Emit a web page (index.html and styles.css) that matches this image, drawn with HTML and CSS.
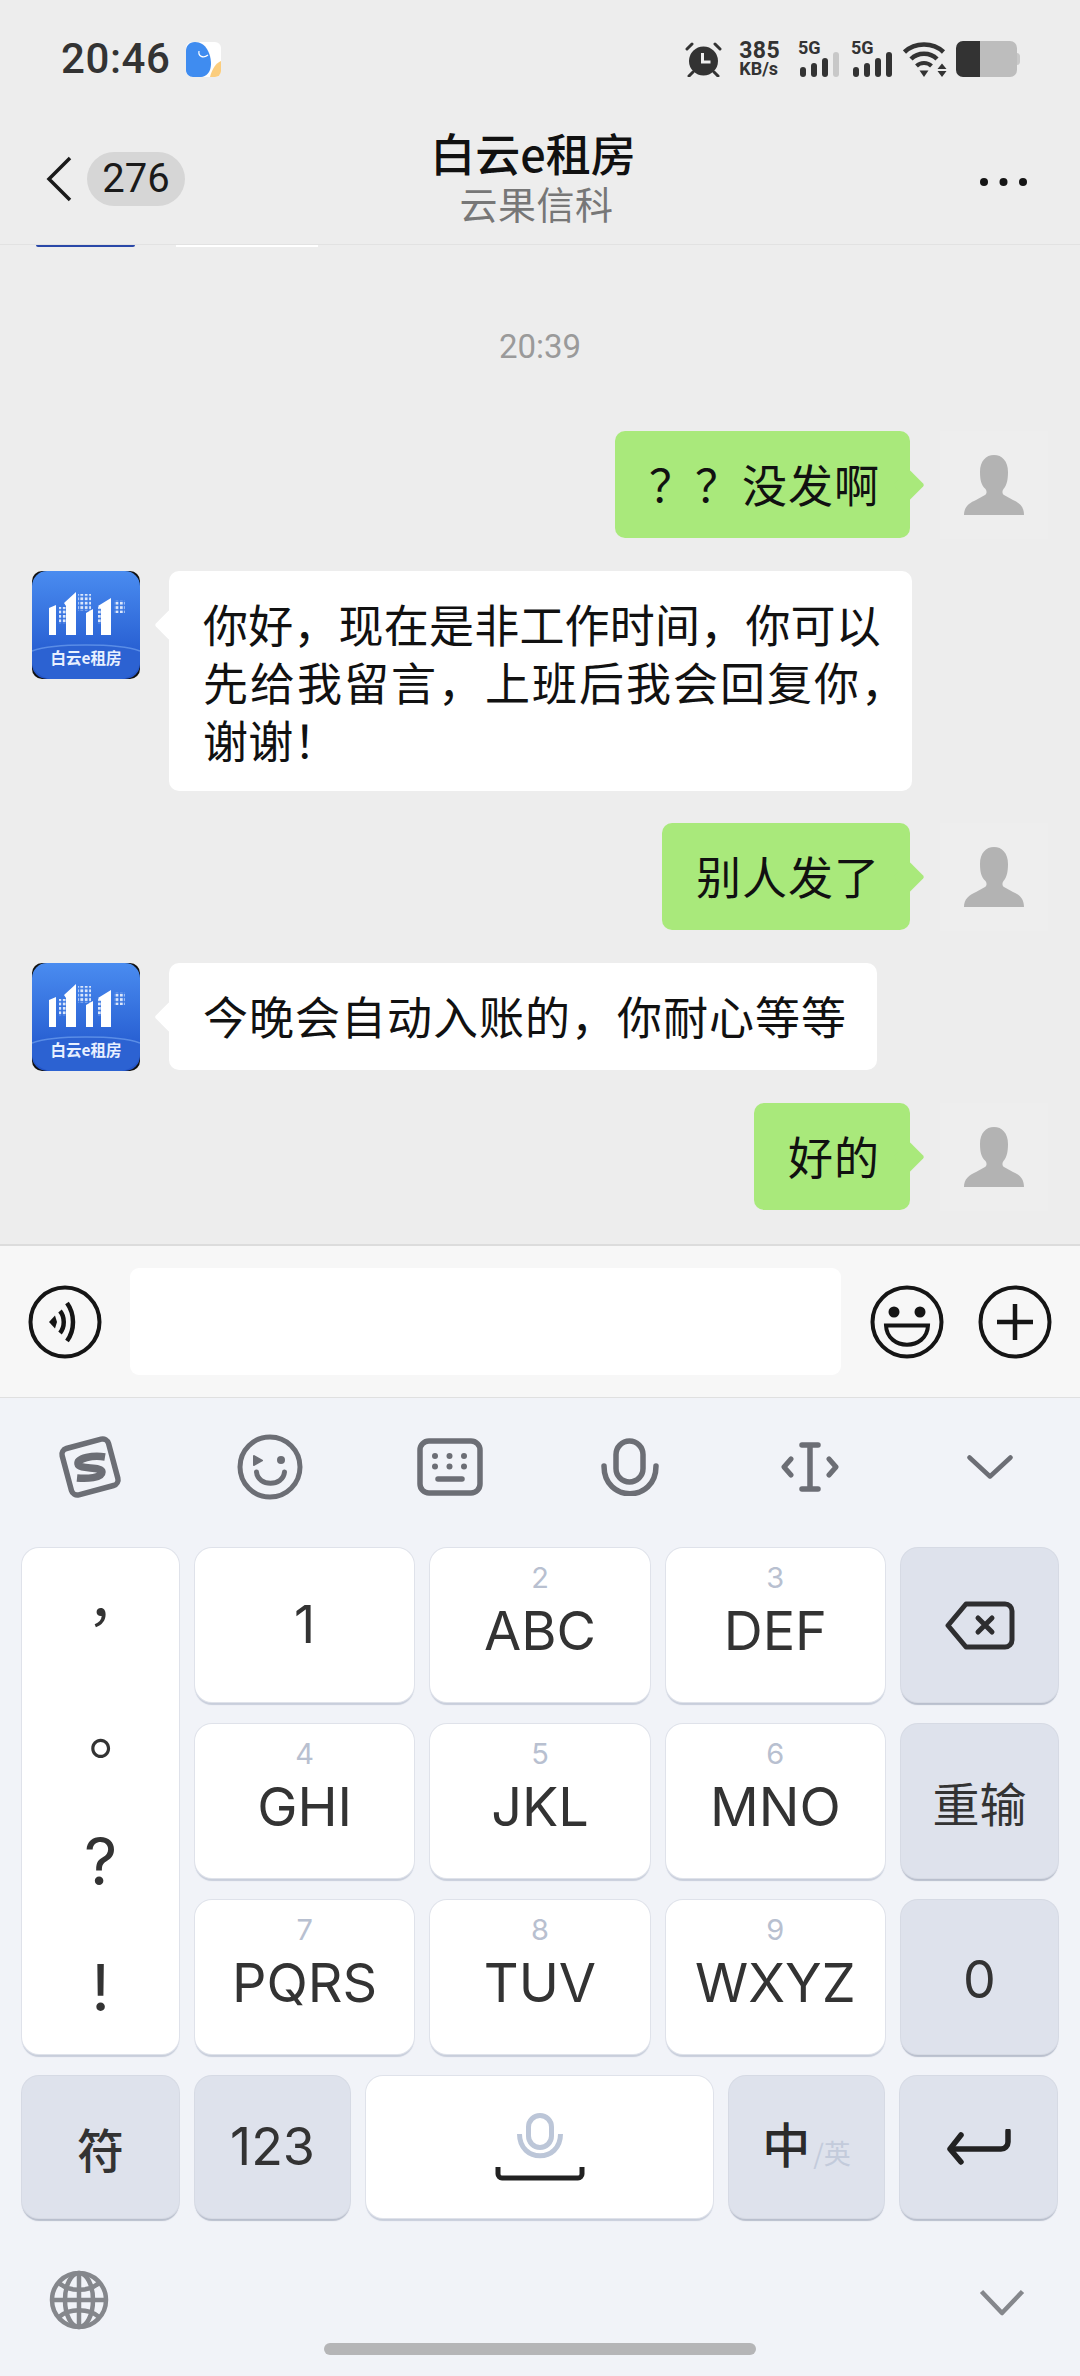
FILE: index.html
```html
<!DOCTYPE html>
<html lang="zh-CN">
<head>
<meta charset="utf-8">
<title>白云e租房</title>
<link rel="stylesheet" href="styles.css">
</head>
<body>
<svg class="defs" width="0" height="0" aria-hidden="true">
  <defs>
    <linearGradient id="logoGrad" x1="0" y1="0" x2="0" y2="1">
      <stop offset="0" stop-color="#4a8cf0"/>
      <stop offset="0.7" stop-color="#2a62d4"/>
      <stop offset="1" stop-color="#2353c6"/>
    </linearGradient>
    <pattern id="logoDots" width="4.400" height="4.400" patternUnits="userSpaceOnUse">
      <rect width="2.800" height="2.800" fill="#dbe7fb"/>
    </pattern>
  </defs>
  <symbol id="person" viewBox="0 0 108 108">
    <path fill="#b3b3b3" d="M24 84c0-8 5-12 12-15l9-5c2-1.500 2-4 .5-6C41 54 40 48 40 41c0-11 6-17 14-17s14 6 14 17c0 7-1 13-4.500 17-1.500 2-1.500 4.500.5 6l9 5c7 3 11 7 11 15z"/>
  </symbol>
  <symbol id="logo" viewBox="0 0 108 108">
    <rect width="108" height="108" fill="#111" rx="10"/>
    <rect width="108" height="108" rx="15" fill="url(#logoGrad)"/>
    <path d="M0 80C22 72 86 72 108 80V90C108 100 100 106 90 108H18C8 106 0 100 0 90Z" fill="#2c62d2"/>
    <path d="M0 80C22 72 86 72 108 80" fill="none" stroke="#5a8de6" stroke-width="1.500"/>
    <rect x="27" y="36" width="13" height="17" fill="url(#logoDots)"/>
    <rect x="46" y="23" width="13" height="17" fill="url(#logoDots)"/>
    <rect x="65" y="36" width="13" height="17" fill="url(#logoDots)"/>
    <rect x="82" y="29" width="11" height="13" fill="url(#logoDots)"/>
    <g fill="#fff">
      <path d="M17 37l7-3v30h-7z"/>
      <path d="M32 32l12-11v43H34V35z"/>
      <path d="M54 42l7-4v26h-7z"/>
      <path d="M66 35l13-8v37H69V38z"/>
    </g>
    <text class="logo-text" x="54" y="93" text-anchor="middle">白云e租房</text>
  </symbol>
</svg>

<div class="phone">
  <header class="top">
    <div class="status">
      <span class="clock">20:46</span>
      <svg class="app-dot" viewBox="0 0 35 35">
        <rect width="35" height="35" rx="6" fill="#fff"/>
        <path d="M35 19C30 21 26 27 24 35H29A6 6 0 0 0 35 29Z" fill="#fbcd7d"/>
        <path d="M9 0C3 0 0 4 0 9V28C0 32 3 35 7 35H15C20 35 25 30 25 22 25 12 20 0 9 0Z" fill="#3f8cf0"/>
        <path d="M13 9C12 14 17 17 22 13" fill="none" stroke="#fff" stroke-width="1.200"/>
      </svg>
      <div class="status-right">
        <svg class="alarm" viewBox="0 0 37 36">
          <circle cx="18.500" cy="20" r="14.500" fill="#333"/>
          <path d="M17.500 12v9h8" fill="none" stroke="#f0f0f0" stroke-width="3"/>
          <path d="M2 8l5-5M35 8l-5-5M4 35l4-4M33 35l-4-4" stroke="#333" stroke-width="3" stroke-linecap="round"/>
        </svg>
        <div class="speed"><span class="speed-n">385</span><span class="speed-u">KB/s</span></div>
        <div class="sig">
          <span class="sig-t">5G</span>
          <svg class="bars" viewBox="0 0 40 25">
            <rect x="0" y="15" width="6" height="10" rx="3" fill="#333"/>
            <rect x="11" y="11" width="6" height="14" rx="3" fill="#333"/>
            <rect x="22" y="6" width="6" height="19" rx="3" fill="#333"/>
            <rect x="33" y="0" width="6" height="25" rx="3" fill="#c8c8c8"/>
          </svg>
        </div>
        <div class="sig">
          <span class="sig-t">5G</span>
          <svg class="bars" viewBox="0 0 40 25">
            <rect x="0" y="15" width="6" height="10" rx="3" fill="#333"/>
            <rect x="11" y="11" width="6" height="14" rx="3" fill="#333"/>
            <rect x="22" y="6" width="6" height="19" rx="3" fill="#333"/>
            <rect x="33" y="0" width="6" height="25" rx="3" fill="#333"/>
          </svg>
        </div>
        <svg class="wifi" viewBox="0 0 44 36">
          <g fill="none" stroke="#333" stroke-width="4.500">
            <path d="M1.500 11C12 1 30 1 40.500 11"/>
            <path d="M8 18C15 11 27 11 34 18"/>
            <path d="M13.500 25C17.500 21 24.500 21 28.500 25" stroke-width="4"/>
          </g>
          <path d="M16.500 29.500h9L21 36z" fill="#333"/>
          <path d="M39 22.500l4.500 5.500h-9zM39 36l-4.500-6h9z" fill="#333"/>
        </svg>
        <svg class="battery" viewBox="0 0 64 36">
          <path d="M24 0H54A7 7 0 0 1 61 7V29A7 7 0 0 1 54 36H24Z" fill="#bdbdbd"/>
          <path d="M7 0H24V36H7A7 7 0 0 1 0 29V7A7 7 0 0 1 7 0Z" fill="#333"/>
          <path d="M61 12C63 12 64 14 64 15V21C64 22 63 24 61 24Z" fill="#c8c8c8"/>
        </svg>
      </div>
    </div>
    <nav class="nav">
      <div class="nav-left">
        <svg class="back" viewBox="0 0 26 46"><path d="M24 2L3 23L24 44" fill="none" stroke="#1a1a1a" stroke-width="3.500"/></svg>
        <span class="badge">276</span>
      </div>
      <div class="nav-title">
        <div class="title">白云e租房</div>
        <div class="subtitle">云果信科</div>
      </div>
      <div class="nav-right">
        <svg class="more" viewBox="0 0 47 8"><circle cx="4" cy="4" r="4"/><circle cx="23.500" cy="4" r="4"/><circle cx="43" cy="4" r="4"/></svg>
      </div>
    </nav>
  </header>

  <main class="chat">
    <div class="peek"><span class="peek-a"></span><span class="peek-b"></span></div>
    <div class="time">20:39</div>
    <div class="msgs">
      <div class="msg me">
        <div class="bubble green">？？ 没发啊</div>
        <svg class="avatar ghost"><use href="#person"/></svg>
      </div>
      <div class="msg them">
        <svg class="avatar"><use href="#logo"/></svg>
        <div class="bubble white wide"><span class="ls0">你好，现在是非工作时间，你可以</span><br><span class="ls2">先给我留言，上班后我会回复你，</span><br><span class="ls0">谢谢！</span></div>
      </div>
      <div class="msg me">
        <div class="bubble green">别人发了</div>
        <svg class="avatar ghost"><use href="#person"/></svg>
      </div>
      <div class="msg them">
        <svg class="avatar"><use href="#logo"/></svg>
        <div class="bubble white">今晚会自动入账的，你耐心等等</div>
      </div>
      <div class="msg me">
        <div class="bubble green">好的</div>
        <svg class="avatar ghost"><use href="#person"/></svg>
      </div>
    </div>
  </main>

  <section class="inputbar">
    <svg class="circle-ic" viewBox="0 0 76 76">
      <circle cx="38" cy="38" r="34.500" fill="none" stroke="#151515" stroke-width="4"/>
      <path d="M22 38l6-6.500 2 6.500-2 6.500z" fill="#151515"/>
      <path d="M33 27c5 6 5 16 0 22" fill="none" stroke="#151515" stroke-width="4.500"/>
      <path d="M40 19c8 11 8 27 0 38" fill="none" stroke="#151515" stroke-width="4.500"/>
    </svg>
    <div class="field"></div>
    <svg class="circle-ic ic-smile" viewBox="0 0 76 76">
      <circle cx="38" cy="38" r="34.500" fill="none" stroke="#151515" stroke-width="4"/>
      <circle cx="25" cy="28" r="5.500" fill="#151515"/>
      <circle cx="51" cy="28" r="5.500" fill="#151515"/>
      <path d="M17 41.500H59C58 67 18 67 17 41.500Z" fill="none" stroke="#151515" stroke-width="4"/>
    </svg>
    <svg class="circle-ic ic-plus" viewBox="0 0 76 76">
      <circle cx="38" cy="38" r="34.500" fill="none" stroke="#151515" stroke-width="4"/>
      <path d="M20 38H56M38 20V56" stroke="#151515" stroke-width="4.500"/>
    </svg>
  </section>

  <section class="keyboard">
    <div class="kb-tools">
      <svg class="tool t66" viewBox="0 0 66 66">
        <rect x="9" y="9" width="48" height="48" rx="6" transform="rotate(-15 33 33)" fill="none" stroke="#6c6e75" stroke-width="5.500"/>
        <path d="M48 23C36 21 20 24 21 30C22 36 45 32 45 38C45 44 30 45 20 44" fill="none" stroke="#6c6e75" stroke-width="7.500"/>
      </svg>
      <svg class="tool t66" viewBox="0 0 66 66">
        <circle cx="33" cy="33" r="30" fill="none" stroke="#6c6e75" stroke-width="5"/>
        <path d="M17 22L25 26.500L17 31Z" fill="#6c6e75" stroke="#6c6e75" stroke-width="2" stroke-linejoin="round"/>
        <circle cx="44" cy="26" r="4" fill="#6c6e75"/>
        <path d="M19.500 38C21 53 46 53 47.500 38" fill="none" stroke="#6c6e75" stroke-width="5" stroke-linecap="round"/>
      </svg>
      <svg class="tool t66x58" viewBox="0 0 66 58">
        <rect x="3" y="3" width="60" height="52" rx="9" fill="none" stroke="#6c6e75" stroke-width="5.500"/>
        <g fill="#6c6e75"><circle cx="18" cy="18" r="3"/><circle cx="32.500" cy="18" r="3"/><circle cx="47" cy="18" r="3"/><circle cx="18" cy="28.500" r="3"/><circle cx="32.500" cy="28.500" r="3"/><circle cx="47" cy="28.500" r="3"/></g>
        <path d="M21 41H45" stroke="#6c6e75" stroke-width="5.500" stroke-linecap="round"/>
      </svg>
      <svg class="tool t58" viewBox="0 0 58 58">
        <rect x="15" y="3" width="27" height="41" rx="13.500" fill="none" stroke="#6c6e75" stroke-width="5.500"/>
        <path d="M3 28C3 65 55 65 55 28" fill="none" stroke="#6c6e75" stroke-width="5.500" stroke-linecap="round"/>
      </svg>
      <svg class="tool t58x50" viewBox="0 0 58 50">
        <path d="M29 3V47M21 3H37M21 47H37" fill="none" stroke="#6c6e75" stroke-width="5.500" stroke-linecap="round"/>
        <path d="M10 17L3 25L10 33M48 17L55 25L48 33" fill="none" stroke="#6c6e75" stroke-width="5" stroke-linecap="round" stroke-linejoin="round"/>
      </svg>
      <svg class="tool t46" viewBox="0 0 46 24">
        <path d="M2.500 2.500L23 21.500L43.500 2.500" fill="none" stroke="#6c6e75" stroke-width="4.500" stroke-linecap="round" stroke-linejoin="round"/>
      </svg>
    </div>

    <div class="keys">
      <div class="key punct">
        <span class="p p-comma">，</span>
        <span class="p p-dot">。</span>
        <span class="p p-q">?</span>
        <span class="p p-ex">!</span>
      </div>
      <div class="key"><span class="solo">1</span></div>
      <div class="key col"><span class="hint">2</span><span class="label">ABC</span></div>
      <div class="key col"><span class="hint">3</span><span class="label">DEF</span></div>
      <div class="key fn">
        <svg class="ic-back" viewBox="0 0 70 49">
          <path d="M21 3H60A7 7 0 0 1 67 10V39A7 7 0 0 1 60 46H21L3 24.500Z" fill="none" stroke="#2e2e30" stroke-width="5" stroke-linejoin="round"/>
          <path d="M33 17L47 31M47 17L33 31" stroke="#2e2e30" stroke-width="5" stroke-linecap="round"/>
        </svg>
      </div>
      <div class="key col"><span class="hint">4</span><span class="label">GHI</span></div>
      <div class="key col"><span class="hint">5</span><span class="label">JKL</span></div>
      <div class="key col"><span class="hint">6</span><span class="label">MNO</span></div>
      <div class="key fn"><span class="cjk-key">重输</span></div>
      <div class="key col"><span class="hint">7</span><span class="label">PQRS</span></div>
      <div class="key col"><span class="hint">8</span><span class="label">TUV</span></div>
      <div class="key col"><span class="hint">9</span><span class="label">WXYZ</span></div>
      <div class="key fn"><span class="solo zero">0</span></div>
    </div>

    <div class="keys-bottom">
      <div class="key fn w157"><span class="cjk-key sym">符</span></div>
      <div class="key fn w155"><span class="solo">123</span></div>
      <div class="key space">
        <svg class="space-mic" viewBox="0 0 46 46">
          <rect x="11.500" y="2.500" width="23" height="32" rx="11.500" fill="none" stroke="#bcc6d8" stroke-width="5"/>
          <path d="M2.500 21C2.500 50 43.500 50 43.500 21" fill="none" stroke="#bcc6d8" stroke-width="5"/>
        </svg>
        <svg class="space-bar" viewBox="0 0 90 14">
          <path d="M3 0V7A4 4 0 0 0 7 11H83A4 4 0 0 0 87 7V0" fill="none" stroke="#222" stroke-width="5"/>
        </svg>
      </div>
      <div class="key fn w155 lang"><span class="lang-a">中</span><span class="lang-b">/ 英</span></div>
      <div class="key fn w157">
        <svg class="ic-enter" viewBox="0 0 66 36">
          <path d="M62 2V13A7 7 0 0 1 55 20H6" fill="none" stroke="#222" stroke-width="5.500" stroke-linecap="round"/>
          <path d="M15 6L4 20L15 33" fill="none" stroke="#222" stroke-width="5.500" stroke-linecap="round" stroke-linejoin="round"/>
        </svg>
      </div>
    </div>

    <div class="kb-foot">
      <svg class="globe" viewBox="0 0 60 60">
        <g fill="none" stroke="#85878c" stroke-width="4.500">
          <circle cx="30" cy="30" r="27"/>
          <path d="M3 30H57M30 3V57"/>
          <ellipse cx="30" cy="30" rx="14" ry="27"/>
          <path d="M10 13C20 22 40 22 50 13M10 47C20 38 40 38 50 47"/>
        </g>
      </svg>
      <svg class="foot-chev" viewBox="0 0 46 28">
        <path d="M2.500 2.500L23 24L43.500 2.500" fill="none" stroke="#85878c" stroke-width="4.500" stroke-linejoin="round"/>
      </svg>
    </div>
    <div class="home"></div>
  </section>
</div>
</body>
</html>
```

FILE: styles.css
```css
* { box-sizing: border-box; }
html, body { margin: 0; padding: 0; }
body {
  width: 1080px;
  height: 2376px;
  overflow: hidden;
  font-family: Roboto, "Noto Sans CJK SC", sans-serif;
  background: #ededed;
}
.defs { position: absolute; }
.logo-text {
  font: 700 15.5px "Noto Sans CJK SC", sans-serif;
  fill: #e8f0ff;
}
.phone { display: flex; flex-direction: column; width: 1080px; height: 2376px; }

/* header */
.top { background: #ededed; height: 245px; flex: none; }
.status { display: flex; align-items: center; height: 116px; padding: 2px 60px 0 61px; }
.clock { font: 500 42px/1 Roboto, sans-serif; color: #333; letter-spacing: .6px; }
.app-dot { width: 35px; height: 35px; margin-left: 15px; }
.status-right { display: flex; align-items: center; margin-left: auto; }
.alarm { width: 37px; height: 36px; }
.speed { display: flex; flex-direction: column; margin-left: 17px; color: #333; font-family: Roboto, sans-serif; font-weight: 700; }
.speed-n { font-size: 23px; line-height: 20px; letter-spacing: .4px; }
.speed-u { font-size: 18px; line-height: 16px; }
.sig { display: flex; flex-direction: column; width: 40px; margin-left: 20px; color: #333; }
.sig + .sig { margin-left: 13px; }
.sig-t { font: 700 18px/14px Roboto, sans-serif; margin-left: -2px; }
.bars { width: 40px; height: 25px; margin-top: -3px; display: block; }
.wifi { width: 44px; height: 36px; margin-left: 10px; }
.battery { width: 64px; height: 36px; margin-left: 9px; }

.nav { display: grid; grid-template-columns: 1fr auto 1fr; align-items: center; height: 129px; padding: 0 53px 0 46px; border-bottom: 1px solid #e2e2e2; }
.nav-left { display: flex; align-items: center; gap: 15px; margin-top: -3px; }
.back { width: 26px; height: 46px; }
.badge { display: flex; align-items: center; justify-content: center; width: 98px; height: 54px; border-radius: 27px; background: #d6d6d6; font: 400 40px/1 Roboto, sans-serif; color: #1a1a1a; }
.nav-title { text-align: center; margin-top: -9px; }
.title { font: 500 45px/50px "Noto Sans CJK SC", sans-serif; color: #111; margin-right: 7px; }
.subtitle { font: 400 38px/42px "Noto Sans CJK SC", sans-serif; color: #777; letter-spacing: .5px; margin-top: 4px; }
.nav-right { display: flex; justify-content: flex-end; }
.more { width: 47px; height: 8px; fill: #151515; margin-top: 3px; }

/* chat */
.chat { flex: none; height: 999px; overflow: hidden; display: flex; flex-direction: column; }
.peek { display: flex; height: 2px; flex: none; padding-left: 36px; gap: 41px; }
.peek-a { width: 99px; background: #2a48a8; border-radius: 0 0 8px 8px; }
.peek-b { width: 142px; background: #fff; }
.time { margin-top: 80px; text-align: center; font: 400 33px/40px Roboto, sans-serif; color: #9a9a9a; }
.msgs { display: flex; flex-direction: column; gap: 32px; margin-top: 64px; padding: 0 32px; }
.msg { display: flex; align-items: flex-start; }
.msg.me { justify-content: flex-end; gap: 30px; }
.msg.them { gap: 29px; }
.avatar { width: 108px; height: 108px; flex: none; }
.ghost { background: #eeeeee; }
.bubble {
  position: relative;
  min-height: 107px;
  padding: 24px 30px 22px 34px;
  border-radius: 10px;
  font: 400 45px/58px "Noto Sans CJK SC", sans-serif;
  letter-spacing: 1px;
  word-spacing: -10px;
  color: #111;
}
.bubble.wide { padding-right: 4px; }
.ls0 { letter-spacing: .2px; }
.ls2 { letter-spacing: 2px; }
.bubble::after {
  content: "";
  position: absolute;
  top: 43px;
  width: 22px;
  height: 22px;
  transform: rotate(45deg);
  border-radius: 2px;
}
.green { background: #a9e97b; }
.green::after { background: #a9e97b; right: -10px; }
.white { background: #fff; }
.white::after { background: #fff; left: -10px; }

/* input */
.inputbar {
  flex: none;
  display: flex;
  align-items: center;
  height: 154px;
  padding: 0 27px;
  background: #f7f7f7;
  border-top: 2px solid #dcdcdc;
  border-bottom: 1px solid #e0e0e0;
}
.circle-ic { width: 76px; height: 76px; flex: none; }
.field { width: 711px; height: 107px; margin-left: 27px; background: #fff; border-radius: 9px; }
.ic-smile { margin-left: 28px; }
.ic-plus { margin-left: 32px; }

/* keyboard */
.keyboard { flex: 1; background: #f1f3f8; }
.kb-tools { display: grid; grid-template-columns: repeat(6, 180px); place-items: center; height: 138px; margin-bottom: 12px; }
.t66 { width: 66px; height: 66px; }
.t66x58 { width: 66px; height: 58px; }
.t58 { width: 58px; height: 58px; }
.t58x50 { width: 58px; height: 50px; }
.t46 { width: 46px; height: 24px; }

.keys { display: grid; grid-template-columns: 157px 1fr 1fr 1fr 157px; grid-template-rows: repeat(3, 154px); gap: 22px 16px; padding: 0 22px; }
.key {
  display: flex;
  align-items: center;
  justify-content: center;
  background: #fff;
  border-radius: 17px;
  box-shadow: 0 0 0 1px #dfe2ea, 0 3px 1px #c8cedb;
  color: #333;
}
.key.fn { background: #dee2ec; box-shadow: 0 0 0 1px #d6dae4, 0 3px 1px #b9bfcd; }
.key.col { flex-direction: column; justify-content: flex-start; padding-top: 15px; gap: 12px; }
.hint { font: 400 29px/30px Inter, sans-serif; color: #b8c0d0; }
.label { font: 400 54px/52px Inter, sans-serif; }
.solo { font: 400 52px/1 Inter, sans-serif; }
.zero { margin-top: 5px; }
.cjk-key { font: 400 47px/1 "Noto Sans CJK SC", sans-serif; }
.sym { font-weight: 500; }

.punct { grid-row: 1 / span 3; flex-direction: column; justify-content: flex-start; }
.p { display: block; height: 126px; width: 100%; text-align: center; }
.p-comma { font: 400 56px/130px "Noto Sans CJK TC", sans-serif; height: 134px; }
.p-dot { font: 400 62px/126px "Noto Sans CJK TC", sans-serif; height: 112px; }
.p-q { font: 400 65px/136px Inter, sans-serif; height: 124px; }
.p-ex { font: 400 65px/140px Inter, sans-serif; }

.keys-bottom { display: flex; gap: 16px; height: 142px; margin-top: 22px; padding: 0 22px; }
.w157 { width: 157px; flex: none; }
.w155 { width: 155px; flex: none; }
.space { width: 347px; flex: none; flex-direction: column; gap: 8px; }
.ic-back { width: 70px; height: 49px; margin-left: 2px; }
.ic-enter { width: 66px; height: 36px; }
.space-mic { width: 46px; height: 46px; }
.space-bar { width: 90px; height: 14px; }
.lang { gap: 3px; }
.lang-a { font: 500 48px/1 "Noto Sans CJK SC", sans-serif; color: #2b2b2b; margin-top: -10px; }
.lang-b { font: 400 27px/1 "Noto Sans CJK SC", sans-serif; color: #c3cbdb; margin-top: 10px; white-space: nowrap; word-spacing: -6px; }

.kb-foot { display: flex; justify-content: space-between; align-items: center; height: 60px; margin-top: 52px; padding: 0 55px 0 49px; }
.globe { width: 60px; height: 60px; }
.foot-chev { width: 46px; height: 28px; margin-top: 6px; }
.home { width: 432px; height: 12px; margin: 13px auto 0; border-radius: 6px; background: #b5b5b7; }
```
